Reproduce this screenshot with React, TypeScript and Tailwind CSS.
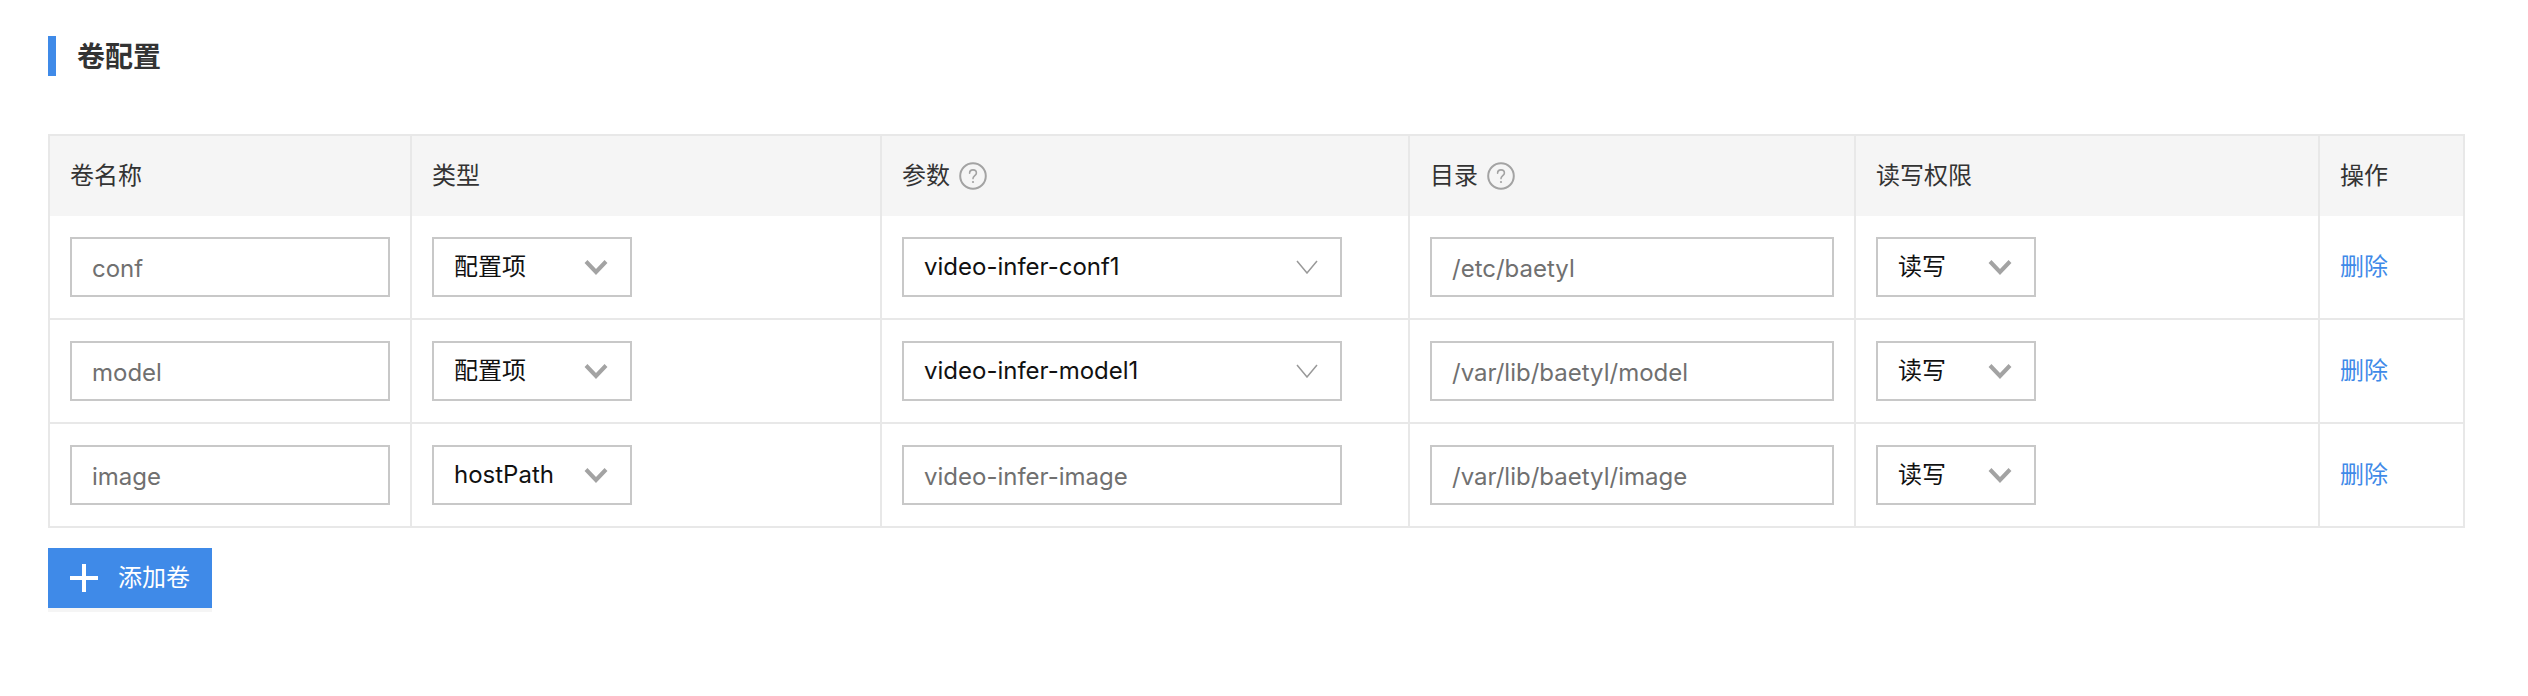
import React from 'react'

interface VolumeRow {
  name: string
  type: string
  param: string
  paramIsSelect: boolean
  dir: string
}

const rows: VolumeRow[] = [
  { name: 'conf', type: '配置项', param: 'video-infer-conf1', paramIsSelect: true, dir: '/etc/baetyl' },
  { name: 'model', type: '配置项', param: 'video-infer-model1', paramIsSelect: true, dir: '/var/lib/baetyl/model' },
  { name: 'image', type: 'hostPath', param: 'video-infer-image', paramIsSelect: false, dir: '/var/lib/baetyl/image' },
]

const HelpIcon = () => (
  <svg width="28" height="28" viewBox="0 0 28 28" fill="none" className="shrink-0">
    <circle cx="14" cy="14" r="12.8" stroke="#a3a3a3" strokeWidth="2" />
    <path d="M10.6 11.2c0-2 1.5-3.3 3.4-3.3s3.4 1.3 3.4 3.1c0 2.6-3.4 2.8-3.4 5.6" stroke="#a3a3a3" strokeWidth="1.6" strokeLinecap="round" />
    <circle cx="14" cy="20" r="1.1" fill="#a3a3a3" />
  </svg>
)

const BoldChevron = () => (
  <svg width="24" height="16" viewBox="0 0 24 16" fill="none" className="shrink-0">
    <path d="M2 2.5 12 13 22 2.5" stroke="#a3a3a3" strokeWidth="4" />
  </svg>
)

const ThinChevron = () => (
  <svg width="22" height="14" viewBox="0 0 22 14" fill="none" className="shrink-0">
    <path d="M1 1 11 13 21 1" stroke="#999999" strokeWidth="1.5" />
  </svg>
)

const TextBox = ({ value, width }: { value: string; width: string }) => (
  <input
    readOnly
    value={value}
    className={`${width} h-[60px] border-2 border-[#c8c8c8] bg-white px-[20px] pt-[2px] text-[24px] text-[#707070] outline-none`}
  />
)

const SelectBox = ({ value, width }: { value: string; width: string }) => (
  <div className={`${width} flex h-[60px] items-center justify-between border-2 border-[#c8c8c8] bg-white pl-[20px] pr-[22px] text-[24px] text-[#111111]`}>
    <span>{value}</span>
    <BoldChevron />
  </div>
)

const th = 'h-[81px] border-2 border-b-0 border-[#e8e8e8] bg-[#f5f5f5] px-[20px] text-left text-[24px] font-normal text-[#333333]'
const td = 'border-2 border-[#e8e8e8] px-[20px] align-middle'

export default function App() {
  return (
    <div className="min-h-[696px] bg-white pl-[48px] pt-[36px] font-['Inter','Noto_Sans_CJK_SC',sans-serif]">
      {/* Section title */}
      <div className="flex h-[40px] items-center border-l-8 border-[#3f8ae8] pl-[21px] pt-[2px] text-[28px] font-semibold leading-none text-[#333333]">
        卷配置
      </div>

      {/* Volume table */}
      <table className="mt-[58px] w-[2415px] table-fixed border-collapse">
        <colgroup>
          <col className="w-[362px]" />
          <col className="w-[470px]" />
          <col className="w-[528px]" />
          <col className="w-[446px]" />
          <col className="w-[464px]" />
          <col className="w-[145px]" />
        </colgroup>
        <thead>
          <tr>
            <th className={th}>卷名称</th>
            <th className={th}>类型</th>
            <th className={th}>
              <div className="flex items-center gap-[9px]">参数 <HelpIcon /></div>
            </th>
            <th className={th}>
              <div className="flex items-center gap-[9px]">目录 <HelpIcon /></div>
            </th>
            <th className={th}>读写权限</th>
            <th className={th}>操作</th>
          </tr>
        </thead>
        <tbody>
          {rows.map((row, i) => {
            const cell = `${td} ${i === 0 ? 'h-[103px] border-t-0' : 'h-[104px]'}`
            return (
              <tr key={row.name}>
                <td className={cell}>
                  <TextBox value={row.name} width="w-[320px]" />
                </td>
                <td className={cell}>
                  <SelectBox value={row.type} width="w-[200px]" />
                </td>
                <td className={cell}>
                  {row.paramIsSelect ? (
                    <div className="flex h-[60px] w-[440px] items-center justify-between border-2 border-[#c8c8c8] bg-white pl-[20px] pr-[22px] text-[24px] text-[#111111]">
                      <span>{row.param}</span>
                      <ThinChevron />
                    </div>
                  ) : (
                    <TextBox value={row.param} width="w-[440px]" />
                  )}
                </td>
                <td className={cell}>
                  <TextBox value={row.dir} width="w-[404px]" />
                </td>
                <td className={cell}>
                  <SelectBox value="读写" width="w-[160px]" />
                </td>
                <td className={`${cell} text-[24px] text-[#3f8ae8]`}>删除</td>
              </tr>
            )
          })}
        </tbody>
      </table>

      {/* Add button */}
      <button className="mt-[20px] flex h-[60px] w-[164px] items-center gap-[20px] bg-[#3f8ae8] pl-[22px] text-[24px] text-white shadow-[0_4px_0_#f5f5f5]">
        <svg width="28" height="28" viewBox="0 0 28 28" className="shrink-0">
          <path d="M14 0v28M0 14h28" stroke="#ffffff" strokeWidth="4" />
        </svg>
        添加卷
      </button>
    </div>
  )
}
